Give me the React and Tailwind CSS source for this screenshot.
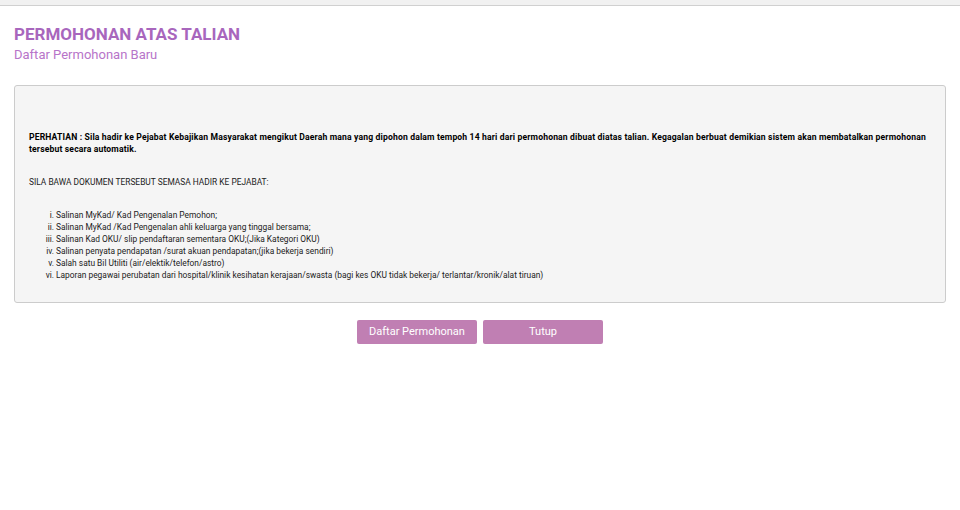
import React from 'react';

export default function App() {
  const items = [
    ['i.', 'Salinan MyKad/ Kad Pengenalan Pemohon;'],
    ['ii.', 'Salinan MyKad /Kad Pengenalan ahli keluarga yang tinggal bersama;'],
    ['iii.', 'Salinan Kad OKU/ slip pendaftaran sementara OKU;(Jika Kategori OKU)'],
    ['iv.', 'Salinan penyata pendapatan /surat akuan pendapatan;(jika bekerja sendiri)'],
    ['v.', 'Salah satu Bil Utiliti (air/elektik/telefon/astro)'],
    ['vi.', 'Laporan pegawai perubatan dari hospital/klinik kesihatan kerajaan/swasta (bagi kes OKU tidak bekerja/ terlantar/kronik/alat tiruan)'],
  ];
  return (
    <div className="w-[960px] h-[510px] bg-white overflow-hidden" style={{ fontFamily: 'Roboto, "Liberation Sans", sans-serif' }}>
      <div className="h-[6px] bg-[#f1f1f1] border-b border-[#d0d0d0]" />
      <div className="px-[14px]">
        <h1 className="mt-[17px] text-[17px] leading-[22px] font-bold text-[#a866bd]">PERMOHONAN ATAS TALIAN</h1>
        <div className="text-[13px] leading-[18px] text-[#b774c9] mt-[1px]">Daftar Permohonan Baru</div>
        <div className="mt-[21px] h-[218px] bg-[#f5f5f5] border border-[#cccccc] rounded-[3px] px-[14px] pt-[45px] text-[8.4px] leading-[12px] text-[#222]">
          <p className="font-bold text-black text-[8.6px] tracking-[0.15px]">
            PERHATIAN : Sila hadir ke Pejabat Kebajikan Masyarakat mengikut Daerah mana yang dipohon dalam tempoh 14 hari dari permohonan dibuat diatas talian. Kegagalan berbuat demikian sistem akan membatalkan permohonan tersebut secara automatik.
          </p>
          <p className="mt-[21px]">SILA BAWA DOKUMEN TERSEBUT SEMASA HADIR KE PEJABAT:</p>
          <div className="mt-[21px]">
            {items.map(([n, t]) => (
              <div key={n} className="flex">
                <span className="w-[27px] text-right pr-[2px]">{n}</span>
                <span>{t}</span>
              </div>
            ))}
          </div>
        </div>
        <div className="flex justify-center gap-[6px] mt-[17px]">
          <button className="w-[120px] h-[24px] rounded-[2px] bg-[#c07fb3] text-white text-[11px]">Daftar Permohonan</button>
          <button className="w-[120px] h-[24px] rounded-[2px] bg-[#c07fb3] text-white text-[11px]">Tutup</button>
        </div>
      </div>
    </div>
  );
}
